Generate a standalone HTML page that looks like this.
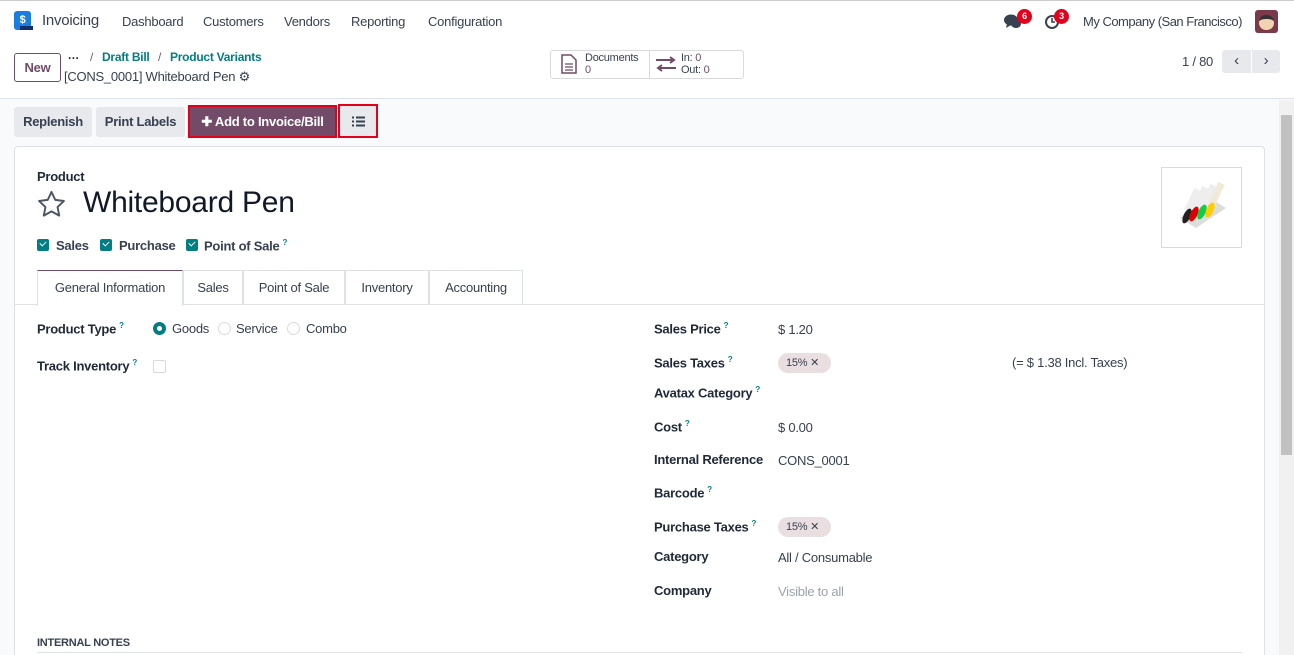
<!DOCTYPE html>
<html style="width:1294px;height:655px;overflow:hidden"><head><meta charset="utf-8">
<style>
*{box-sizing:border-box;margin:0;padding:0}
body{width:1294px;height:655px;overflow:hidden;font-family:"Liberation Sans",sans-serif;font-size:13px;letter-spacing:-0.25px;color:#374151;background:#f9fafb;position:relative}
.a{position:absolute;white-space:nowrap}
.b{font-weight:bold;color:#1f2937}
.teal{color:#017e84}
.q{font-size:8px;color:#017e84;vertical-align:super;margin-left:3px}
.btn{position:absolute;top:107px;height:30px;background:#e7e9ed;border-radius:3px;font-weight:bold;color:#374151;line-height:30px;text-align:center;font-size:13px}
.chk{position:absolute;width:12px;height:12px;background:#017e84;border-radius:2px}
.chk:after{content:"";position:absolute;left:3px;top:2px;width:5px;height:3px;border-left:1.5px solid #fff;border-bottom:1.5px solid #fff;transform:rotate(-45deg)}
.tag{position:absolute;height:20px;width:53px;border-radius:10px;background:#eadfe0;font-size:11px;line-height:20px;padding-left:8px;color:#374151}
.tab{position:absolute;top:270px;height:35px;border:1px solid #dee2e6;border-bottom:none;line-height:34px;text-align:center;color:#374151}
</style></head><body>
<div class="a" style="left:0;top:0;width:1294px;height:99px;background:#fff;border-bottom:1px solid #dee2e6"></div>
<div class="a" style="left:0;top:0;width:1294px;height:1px;background:#ccc"></div>
<div class="a" style="left:14px;top:11px;width:17px;height:19px;background:#1a7ee0;border-radius:3px;color:#fff;font-weight:bold;font-size:11px;text-align:center;line-height:19px">$</div>
<div class="a" style="left:20px;top:26px;width:13px;height:4px;background:#10306b"></div>
<div class="a" style="left:42px;top:12px;font-size:15px;color:#374151">Invoicing</div>
<div class="a" style="left:122px;top:14px">Dashboard</div>
<div class="a" style="left:203px;top:14px">Customers</div>
<div class="a" style="left:284px;top:14px">Vendors</div>
<div class="a" style="left:351px;top:14px">Reporting</div>
<div class="a" style="left:428px;top:14px">Configuration</div>
<svg class="a" style="left:1004px;top:14px" width="18" height="16" viewBox="0 0 18 16"><ellipse cx="7" cy="6" rx="7" ry="5.5" fill="#374151"/><path d="M3 10 L2 14 L7 11Z" fill="#374151"/><ellipse cx="12" cy="10" rx="5" ry="4" fill="#374151"/></svg>
<div class="a" style="left:1017px;top:9px;width:15px;height:15px;border-radius:8px;background:#e3001b;color:#fff;font-size:9px;font-weight:bold;text-align:center;line-height:15px">6</div>
<svg class="a" style="left:1044px;top:14px" width="16" height="16" viewBox="0 0 16 16"><circle cx="8" cy="8" r="6" fill="none" stroke="#374151" stroke-width="2"/><path d="M8 4v4h3" stroke="#374151" stroke-width="1.6" fill="none"/></svg>
<div class="a" style="left:1054px;top:9px;width:15px;height:15px;border-radius:8px;background:#e3001b;color:#fff;font-size:9px;font-weight:bold;text-align:center;line-height:15px">3</div>
<div class="a" style="left:1083px;top:14px;letter-spacing:-0.5px">My Company (San Francisco)</div>
<div class="a" style="left:1255px;top:10px;width:23px;height:23px;background:#7a3a4a;border-radius:3px"><div style="margin:5px 4px;width:15px;height:15px;background:#f2d2b0;border-radius:7px;border-top:4px solid #333"></div></div>
<div class="a" style="left:14px;top:53px;width:47px;height:29px;border:1px solid #714b67;border-radius:3px;color:#714b67;font-weight:bold;text-align:center;line-height:27px">New</div>
<div class="a b" style="left:68px;top:51px;font-size:12px">···</div>
<div class="a" style="left:90px;top:50px;font-size:12px;color:#666">/</div>
<div class="a teal" style="left:102px;top:50px;font-weight:bold;font-size:12px">Draft Bill</div>
<div class="a" style="left:158px;top:50px;font-size:12px;color:#666">/</div>
<div class="a teal" style="left:170px;top:50px;font-weight:bold;font-size:12px">Product Variants</div>
<div class="a" style="left:64px;top:69px">[CONS_0001] Whiteboard Pen ⚙</div>
<div class="a" style="left:550px;top:50px;width:194px;height:29px;border:1px solid #d8dadd;border-radius:3px;background:#fff"></div>
<div class="a" style="left:649px;top:51px;width:1px;height:27px;background:#d8dadd"></div>
<svg class="a" style="left:561px;top:54px" width="16" height="20" viewBox="0 0 16 20"><path d="M1 1h9l5 5v13H1z" fill="none" stroke="#714b67" stroke-width="1.5"/><path d="M4 10h8M4 13h8M4 16h8" stroke="#714b67" stroke-width="1.3"/></svg>
<div class="a" style="left:585px;top:52px;font-size:11px;line-height:12px">Documents<br><span style="color:#714b67">0</span></div>
<svg class="a" style="left:655px;top:56px" width="22" height="16" viewBox="0 0 22 16"><path d="M1 4h18M15 1l4 3-4 3M21 12H3M7 9l-4 3 4 3" stroke="#714b67" stroke-width="2" fill="none"/></svg>
<div class="a" style="left:681px;top:52px;font-size:11px;line-height:12px">In: <span style="color:#714b67">0</span><br>Out: <span style="color:#714b67">0</span></div>
<div class="a" style="left:1182px;top:54px">1 / 80</div>
<div class="a" style="left:1222px;top:50px;width:29px;height:23px;background:#e7e9ed;border-radius:3px 0 0 3px;text-align:center;line-height:22px;font-size:15px">‹</div>
<div class="a" style="left:1251px;top:50px;width:29px;height:23px;background:#e7e9ed;border-left:1px solid #fff;border-radius:0 3px 3px 0;text-align:center;line-height:22px;font-size:15px">›</div>
<div class="btn" style="left:14px;width:78px">Replenish</div>
<div class="btn" style="left:96px;width:89px">Print Labels</div>
<div class="a" style="left:188px;top:105px;width:149px;height:33px;border:2px solid #e3001b;background:#714b67;color:#fff;font-weight:bold;line-height:29px;text-align:center">✚ Add to Invoice/Bill</div>
<div class="a" style="left:338px;top:104px;width:40px;height:34px;border:2px solid #e3001b;background:#e7e9ed"><svg style="position:absolute;left:12px;top:10px" width="13" height="11" viewBox="0 0 13 11"><path d="M0 1.5h2M4 1.5h9M0 5.5h2M4 5.5h9M0 9.5h2M4 9.5h9" stroke="#374151" stroke-width="2"/></svg></div>
<div class="a" style="left:1279px;top:100px;width:15px;height:555px;background:#f1f1f1"></div>
<div class="a" style="left:1281px;top:115px;width:11px;height:340px;background:#c1c1c1"></div>
<div class="a" style="left:14px;top:146px;width:1251px;height:509px;background:#fff;border:1px solid #dee2e6;border-bottom:none;border-radius:4px 4px 0 0"></div>
<div class="a b" style="left:37px;top:169px">Product</div>
<svg class="a" style="left:37px;top:190px" width="29" height="28" viewBox="0 0 24 23"><path d="M12 1.5l3.1 6.6 7.2.9-5.3 5 1.4 7.1L12 17.6l-6.4 3.5 1.4-7.1-5.3-5 7.2-.9z" fill="none" stroke="#4b5563" stroke-width="1.6" stroke-linejoin="round"/></svg>
<div class="a" style="left:83px;top:186px;font-size:30px;color:#111827">Whiteboard Pen</div>
<div class="chk" style="left:37px;top:239px"></div><div class="a b" style="left:56px;top:238px;color:#374151">Sales</div>
<div class="chk" style="left:100px;top:239px"></div><div class="a b" style="left:119px;top:238px;color:#374151">Purchase</div>
<div class="chk" style="left:186px;top:239px"></div><div class="a b" style="left:204px;top:238px;color:#374151">Point of Sale<span class="q">?</span></div>
<div class="a" style="left:1161px;top:167px;width:81px;height:81px;border:1px solid #d8dadd;background:#fff">
<svg width="79" height="79" viewBox="0 0 79 79"><path d="M18 50l16 10 30-20-16-10z" fill="#ddd"/><rect x="27" y="20" width="7" height="24" fill="#eee" transform="rotate(25 30 32)"/><rect x="35" y="18" width="7" height="24" fill="#eee" transform="rotate(25 38 30)"/><rect x="43" y="16" width="7" height="24" fill="#eee" transform="rotate(25 46 28)"/><rect x="51" y="14" width="7" height="24" fill="#f2ead8" transform="rotate(25 54 26)"/><ellipse cx="25" cy="48" rx="3.5" ry="8" fill="#222" transform="rotate(25 25 48)"/><ellipse cx="32" cy="46" rx="3.5" ry="8" fill="#d00" transform="rotate(25 32 46)"/><ellipse cx="40" cy="44" rx="3.5" ry="8" fill="#1c4" transform="rotate(25 40 44)"/><ellipse cx="48" cy="42" rx="3.5" ry="8" fill="#fc0" transform="rotate(25 48 42)"/></svg></div>
<div class="a" style="left:14px;top:304px;width:1251px;height:1px;background:#dee2e6"></div>
<div class="tab" style="left:37px;width:146px;border-top:1px solid #714b67;background:#fff;height:36px">General Information</div>
<div class="tab" style="left:183px;width:60px">Sales</div>
<div class="tab" style="left:243px;width:102px">Point of Sale</div>
<div class="tab" style="left:345px;width:84px">Inventory</div>
<div class="tab" style="left:429px;width:94px">Accounting</div>
<div class="a b" style="left:37px;top:321px">Product Type<span class="q">?</span></div>
<div class="a" style="left:153px;top:322px;width:13px;height:13px;border-radius:7px;background:#017e84"><div style="margin:4px;width:5px;height:5px;border-radius:3px;background:#fff"></div></div>
<div class="a" style="left:172px;top:321px">Goods</div>
<div class="a" style="left:218px;top:322px;width:13px;height:13px;border-radius:7px;border:1px solid #d8dadd"></div>
<div class="a" style="left:236px;top:321px">Service</div>
<div class="a" style="left:287px;top:322px;width:13px;height:13px;border-radius:7px;border:1px solid #d8dadd"></div>
<div class="a" style="left:306px;top:321px">Combo</div>
<div class="a b" style="left:37px;top:358px">Track Inventory<span class="q">?</span></div>
<div class="a" style="left:153px;top:360px;width:13px;height:13px;border:1px solid #d8dadd;border-radius:2px"></div>
<div class="a b" style="left:654px;top:321px">Sales Price<span class="q">?</span></div><div class="a" style="left:778px;top:322px">$ 1.20</div>
<div class="a b" style="left:654px;top:355px">Sales Taxes<span class="q">?</span></div><div class="tag" style="left:778px;top:353px">15% ✕</div>
<div class="a" style="left:1012px;top:355px">(= $ 1.38 Incl. Taxes)</div>
<div class="a b" style="left:654px;top:385px">Avatax Category<span class="q">?</span></div>
<div class="a b" style="left:654px;top:419px">Cost<span class="q">?</span></div><div class="a" style="left:778px;top:420px">$ 0.00</div>
<div class="a b" style="left:654px;top:452px">Internal Reference</div><div class="a" style="left:778px;top:453px">CONS_0001</div>
<div class="a b" style="left:654px;top:485px">Barcode<span class="q">?</span></div>
<div class="a b" style="left:654px;top:519px">Purchase Taxes<span class="q">?</span></div><div class="tag" style="left:778px;top:517px">15% ✕</div>
<div class="a b" style="left:654px;top:549px">Category</div><div class="a" style="left:778px;top:550px">All / Consumable</div>
<div class="a b" style="left:654px;top:583px">Company</div><div class="a" style="left:778px;top:584px;color:#9ca3af">Visible to all</div>
<div class="a b" style="left:37px;top:637px;font-size:11px;color:#374151">INTERNAL NOTES</div>
<div class="a" style="left:37px;top:652px;width:1205px;height:1px;background:#dee2e6"></div>
</body></html>
